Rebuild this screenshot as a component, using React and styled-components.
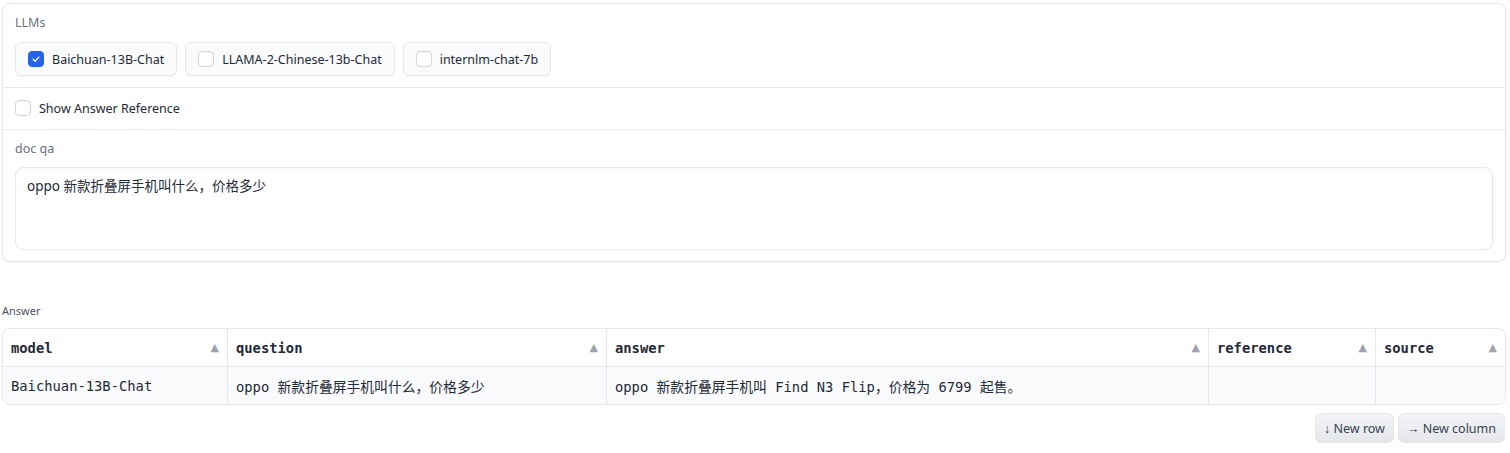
import React from 'react';
import styled, { createGlobalStyle, css } from 'styled-components';

const GlobalStyle = createGlobalStyle`
  body {
    margin: 0;
    background: #ffffff;
    font-family: "Noto Sans", "Noto Sans CJK SC", sans-serif;
    color: #1f2937;
  }
`;

const Page = styled.div`
  padding: 3px 4px 0 2px;
`;

const Panel = styled.div`
  border: 1px solid #e5e7eb;
  border-radius: 8px;
  background: #fff;
  box-shadow: 0 1px 2px rgba(0, 0, 0, 0.03);
`;

const Section = styled.div`
  padding: ${p => p.pad || '10px 12px 11px'};
  & + & {
    border-top: 1px solid #e5e7eb;
  }
`;

const Label = styled.div`
  font-size: 12.5px;
  line-height: 18px;
  color: #6b7280;
  margin-bottom: ${p => p.gap || 10}px;
`;

const ChipRow = styled.div`
  display: flex;
  gap: 8px;
`;

const Chip = styled.label`
  display: flex;
  align-items: center;
  gap: 8px;
  height: 34px;
  box-sizing: border-box;
  padding: 0 12px;
  border: 1px solid #e5e7eb;
  border-radius: 6px;
  background: #fafbfc;
  box-shadow: 0 1px 2px rgba(0, 0, 0, 0.04);
  font-size: 12.5px;
  color: #1f2937;
`;

const Box = styled.span`
  display: inline-flex;
  align-items: center;
  justify-content: center;
  width: 16px;
  height: 16px;
  box-sizing: border-box;
  border-radius: 4px;
  border: 1px solid #d1d5db;
  background: #fff;
  box-shadow: inset 0 1px 1px rgba(0, 0, 0, 0.04);
  ${p =>
    p.checked &&
    css`
      border-color: #2563eb;
      background: #2563eb;
    `};
`;

const Check = ({ checked }) => (
  <Box checked={checked}>
    {checked && (
      <svg width="10" height="10" viewBox="0 0 16 16">
        <path d="M3.5 8.5l3 3 6-6.5" fill="none" stroke="#fff" strokeWidth="2.2" strokeLinecap="round" strokeLinejoin="round" />
      </svg>
    )}
  </Box>
);

const Toggle = styled.label`
  display: flex;
  align-items: center;
  gap: 8px;
  height: 18px;
  font-size: 12.5px;
  color: #1f2937;
`;

const TextArea = styled.div`
  height: 83px;
  box-sizing: border-box;
  border: 1px solid #e5e7eb;
  border-radius: 8px;
  padding: 8px 11px;
  font-size: 13.5px;
  line-height: 20px;
  color: #1f2937;
  box-shadow: inset 0 1px 2px rgba(0, 0, 0, 0.03);
`;

const AnswerBlock = styled.div`
  margin-top: 41px;
`;

const SmallLabel = styled.div`
  font-size: 11px;
  line-height: 16px;
  color: #4b5563;
  margin-bottom: 9px;
`;

const Table = styled.div`
  display: grid;
  grid-template-columns: 224px 379px 602px 167px 1fr;
  border: 1px solid #e5e7eb;
  border-radius: 8px;
  overflow: hidden;
  font-family: "DejaVu Sans Mono", "Noto Sans CJK SC", monospace;
  font-size: 13.8px;
`;

const Cell = styled.div`
  display: flex;
  align-items: center;
  justify-content: space-between;
  height: 37px;
  padding: 0 8px;
  color: #1f2937;
  background: ${p => (p.head ? '#ffffff' : '#f9fafb')};
  font-weight: ${p => (p.head ? 700 : 400)};
  border-left: ${p => (p.first ? 'none' : '1px solid #e5e7eb')};
  border-bottom: ${p => (p.head ? '1px solid #e5e7eb' : 'none')};
  white-space: pre;
`;

const Sort = styled.span`
  font-family: "DejaVu Sans", sans-serif;
  font-size: 11px;
  color: #9ca3af;
  font-weight: 400;
`;

const Actions = styled.div`
  display: flex;
  justify-content: flex-end;
  gap: 4px;
  margin-top: 8px;
  padding-right: 1px;
`;

const Button = styled.button`
  height: 30px;
  padding: 0 8px;
  border: 1px solid #e5e7eb;
  border-radius: 6px;
  background: linear-gradient(#f3f4f6, #e5e7eb);
  font-family: "Noto Sans", sans-serif;
  font-size: 12.5px;
  color: #374151;
`;

const columns = ['model', 'question', 'answer', 'reference', 'source'];
const row = [
  'Baichuan-13B-Chat',
  'oppo 新款折叠屏手机叫什么，价格多少',
  'oppo 新款折叠屏手机叫 Find N3 Flip，价格为 6799 起售。',
  '',
  '',
];
const models = [
  { name: 'Baichuan-13B-Chat', checked: true },
  { name: 'LLAMA-2-Chinese-13b-Chat', checked: false },
  { name: 'internlm-chat-7b', checked: false },
];

export default function App() {
  return (
    <Page>
      <GlobalStyle />
      <Panel>
        <Section>
          <Label>LLMs</Label>
          <ChipRow>
            {models.map(m => (
              <Chip key={m.name}>
                <Check checked={m.checked} />
                {m.name}
              </Chip>
            ))}
          </ChipRow>
        </Section>
        <Section pad="11px 12px 12px">
          <Toggle>
            <Check />
            Show Answer Reference
          </Toggle>
        </Section>
        <Section pad="10px 12px 11px">
          <Label gap={9}>doc qa</Label>
          <TextArea>oppo 新款折叠屏手机叫什么，价格多少</TextArea>
        </Section>
      </Panel>
      <AnswerBlock>
        <SmallLabel>Answer</SmallLabel>
        <Table>
          {columns.map((c, i) => (
            <Cell head first={i === 0} key={c}>
              {c}
              <Sort>▲</Sort>
            </Cell>
          ))}
          {row.map((v, i) => (
            <Cell first={i === 0} key={i}>
              {v}
            </Cell>
          ))}
        </Table>
        <Actions>
          <Button>↓ New row</Button>
          <Button>→ New column</Button>
        </Actions>
      </AnswerBlock>
    </Page>
  );
}
